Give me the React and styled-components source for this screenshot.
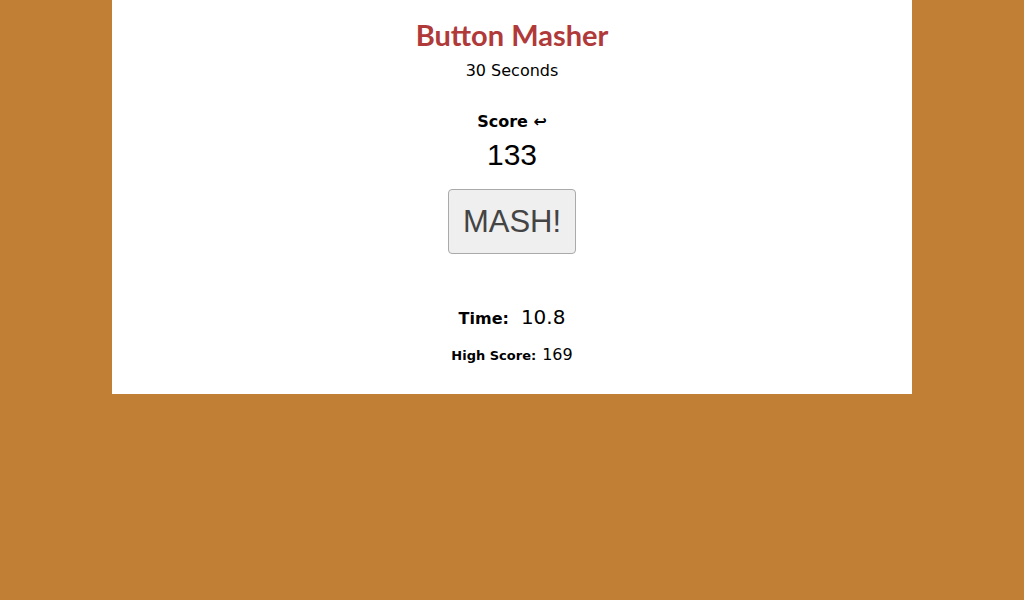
import React from "react";
import styled, { createGlobalStyle } from "styled-components";

const Global = createGlobalStyle`
  html, body { margin: 0; padding: 0; background: #c17f35; }
  body { font-family: "DejaVu Sans", Verdana, sans-serif; color: #000; }
`;

const Card = styled.main`
  width: 800px;
  margin: 0 auto;
  background: #fff;
  display: flex;
  flex-direction: column;
  align-items: center;
  padding: 18px 0 20px;
  box-sizing: border-box;
  height: 394px;
`;

const Title = styled.h1`
  margin: 0;
  font-family: "Trebuchet MS", Lato, "DejaVu Sans", sans-serif;
  font-size: 29px;
  line-height: 34px;
  font-weight: bold;
  color: #b03a3a;
`;

const Sub = styled.div`
  margin-top: 9px;
  font-size: 16px;
  line-height: 20px;
`;

const Label = styled.div`
  margin-top: 31px;
  font-size: 16px;
  line-height: 20px;
  font-weight: bold;
`;

const Score = styled.div`
  font-family: "Liberation Sans", Arial, sans-serif;
  font-size: 30px;
  line-height: 34px;
  margin-top: 6px;
`;

const Mash = styled.button`
  margin-top: 17px;
  width: 128px;
  height: 65px;
  font-family: "Liberation Sans", Arial, sans-serif;
  font-size: 31px;
  color: #444;
  background: #efefef;
  border: 1px solid #aaa;
  border-radius: 4px;
  padding: 0;
  cursor: pointer;
`;

const Row = styled.div`
  display: flex;
  align-items: baseline;
  gap: ${(p) => p.$gap || 6}px;
  margin-top: ${(p) => p.$mt}px;
`;

const Key = styled.span`
  font-weight: bold;
  font-size: ${(p) => p.$size}px;
`;

const Val = styled.span`
  font-size: ${(p) => p.$size}px;
`;

export default function App() {
  return (
    <>
      <Global />
      <Card>
        <Title>Button Masher</Title>
        <Sub>30 Seconds</Sub>
        <Label>Score ↩</Label>
        <Score>133</Score>
        <Mash>MASH!</Mash>
        <Row $mt={51} $gap={12}>
          <Key $size={16}>Time:</Key>
          <Val $size={20}>10.8</Val>
        </Row>
        <Row $mt={16} $gap={6}>
          <Key $size={13}>High Score:</Key>
          <Val $size={16}>169</Val>
        </Row>
      </Card>
    </>
  );
}
